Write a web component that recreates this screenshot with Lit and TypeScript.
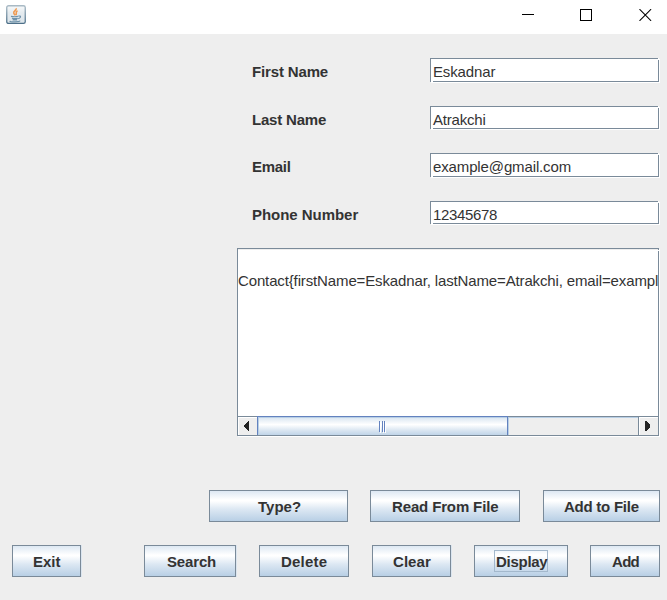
import { LitElement, html, css, svg } from "lit";
import { customElement } from "lit/decorators.js";
import { classMap } from "lit/directives/class-map.js";
import { styleMap } from "lit/directives/style-map.js";

interface Field { label: string; value: string; height: number; labelTracking: number; valueTracking: number; }
interface Action { label: string; width: number; gap: number; inset: number; tracking: number; focused?: boolean; glow?: boolean; }

const FIELDS: Field[] = [
  { label: "First Name", value: "Eskadnar", height: 24, labelTracking: -0.15, valueTracking: -0.13 },
  { label: "Last Name", value: "Atrakchi", height: 23, labelTracking: -0.2, valueTracking: -0.2 },
  { label: "Email", value: "example@gmail.com", height: 24, labelTracking: -0.3, valueTracking: -0.13 },
  { label: "Phone Number", value: "12345678", height: 23, labelTracking: -0.04, valueTracking: -0.34 },
];

const FILE_ACTIONS: Action[] = [
  { label: "Type?", width: 139, gap: 209, inset: 48, tracking: 0 },
  { label: "Read From File", width: 150, gap: 22, inset: 21, tracking: -0.14 },
  { label: "Add to File", width: 117, gap: 23, inset: 20, tracking: -0.25 },
];

const CONTACT_ACTIONS: Action[] = [
  { label: "Exit", width: 69, gap: 12, inset: 20, tracking: 0, glow: true },
  { label: "Search", width: 92, gap: 63, inset: 22, tracking: -0.15, glow: true },
  { label: "Delete", width: 90, gap: 23, inset: 21, tracking: 0.2 },
  { label: "Clear", width: 79, gap: 23, inset: 20, tracking: 0.05, glow: true },
  { label: "Display", width: 94, gap: 23, inset: 21, tracking: -0.28, focused: true },
  { label: "Add", width: 70, gap: 22, inset: 21, tracking: -0.7 },
];

@customElement("app-root")
export class AppRoot extends LitElement {
  static styles = css`
    :host {
      display: block;
      width: 667px;
      height: 600px;
      overflow: hidden;
      background: #eee;
      color: #333;
      font: 15px/17px "Liberation Sans", Arial, sans-serif;
    }
    * { box-sizing: border-box; }
    svg { display: block; }
    .titlebar { display: flex; height: 34px; background: #fff; padding-left: 6px; }
    .logo { margin-top: 5px; }
    .controls { display: flex; margin: 9px 0 0 auto; padding-right: 15px; }
    .controls svg + svg { margin-left: 46px; }
    .controls svg:last-child { margin-left: 47px; }
    .form { padding: 24px 8px 0 252px; }
    .row { display: flex; margin-bottom: 24px; }
    .label { width: 178px; font-weight: bold; padding-top: 5px; white-space: nowrap; }
    .input, .output {
      position: relative;
      background: #fff;
      border: 1px solid #7a8a99;
      box-shadow: 1px 1px 0 #fff;
    }
    .input { width: 229px; padding: 4px 0 0 2px; white-space: nowrap; }
    .input::before, .input::after, .output::before { content: ""; position: absolute; background: #fff; }
    .input::before { left: 0; bottom: -1px; width: 2px; height: 1px; }
    .input::after { right: -1px; top: -1px; width: 1px; height: 2px; }
    .output::before { right: -1px; top: 1px; width: 1px; height: 1px; }
    .output {
      width: 422px;
      height: 188px;
      margin-left: 237px;
      display: flex;
      flex-direction: column;
    }
    .text { flex: 1; white-space: pre; padding-top: 23px; letter-spacing: -0.135px; box-shadow: inset 0 1px 0 #eee; }
    .scroll { display: flex; height: 19px; }
    .arrow { width: 19px; border-top: 1px solid #7a8a99; box-shadow: inset 1px 1px 0 #fff; background: #eee; }
    .right { width: 20px; border-left: 1px solid #7a8a99; }
    .thumb {
      width: 251px;
      border: 1px solid #6382bf;
      border-bottom: 0;
      box-shadow: inset 1px 1px 0 #b8cfe5;
      background: linear-gradient(#dce7f2 5%, #fff 42%, #dce7f2 72%, #c0d4e8);
      display: flex;
      justify-content: center;
    }
    .grip { margin-left: -2px; }
    .track { flex: 1; background: #eee; border-top: 1px solid #7a8a99; box-shadow: inset 1px 1px 0 #b8cfe5; }
    .actions { display: flex; height: 32px; margin-bottom: 23px; }
    .actions.first { margin-top: 54px; }
    .button {
      border: 1px solid #7a8a99;
      background: linear-gradient(#dde8f3, #fff 30%, #fff 33%, #dde8f3 60%, #b8cfe5);
      font-weight: bold;
      padding-top: 7px;
      white-space: nowrap;
      flex: none;
    }
    .glow { box-shadow: 1px 0 0 #dbe5ef; }
    .caption { display: block; }
    .focused { width: 54px; height: 22px; margin: -3px 0 0 -2px; padding: 2px 0 0 1px; border: 1px solid #a3b8cc; }
  `;

  private icon() {
    return svg`<svg class="logo" width="20" height="20" viewBox="0 0 20 20">
      <defs><linearGradient id="g" x1="0" y1="0" x2="0" y2="1"><stop offset="0" stop-color="#f8fafb"/><stop offset=".4" stop-color="#e5ebef"/><stop offset="1" stop-color="#dce5ea"/></linearGradient>
      <linearGradient id="b" x1="0" y1="0" x2="0" y2="1"><stop offset="0" stop-color="#a9bac5"/><stop offset="1" stop-color="#4d7089"/></linearGradient></defs>
      <rect x=".75" y=".75" width="18.5" height="17.700" rx="1.8" fill="url(#g)" stroke="url(#b)" stroke-width="1.3"/>
      <path d="M10 3.200C11.300 5 6.800 6.200 7.800 8.200C8.200 9.200 9 9.600 9.300 10.400M11.500 5.800C8.800 7.200 11.300 8.300 9.800 10" fill="none" stroke="#f09a50" stroke-width="1.6"/>
      <path d="M5 11.300Q9 12.200 12 11.200M6 13.200Q9 14.200 11.800 13.200M6.600 14.900H11.200M3.800 15.800Q4 17 9 16.800Q13.800 16.700 14 15.700M12.300 11.200Q15 10.500 14.400 12.200Q13.700 13.300 12.200 13.800" fill="none" stroke="#6f92aa" stroke-width="1.2"/>
    </svg>`;
  }

  private button(a: Action) {
    return html`<div class=${classMap({ button: true, glow: !!a.glow })} role="button" style=${styleMap({ width: `${a.width}px`, marginLeft: `${a.gap}px`, paddingLeft: `${a.inset}px` })}>
      <span class=${classMap({ caption: true, focused: !!a.focused })} style=${styleMap({ letterSpacing: `${a.tracking}px` })}>${a.label}</span>
    </div>`;
  }

  render() {
    return html`
      <div class="titlebar">
        ${this.icon()}
        <div class="controls">
          <svg width="12" height="12" shape-rendering="crispEdges"><path d="M0 5h12v1H0z"/></svg>
          <svg width="12" height="12" shape-rendering="crispEdges"><path d="M.5.5h11v11H.5z" fill="none" stroke="#000"/></svg>
          <svg width="13" height="12"><path d="M.5.2l11.600 11.600M12.100.2L.5 11.800" stroke="#000" stroke-width="1.1"/></svg>
        </div>
      </div>
      <div class="form">
        ${FIELDS.map((f) => html`<div class="row" style=${styleMap({ height: `${f.height}px` })}>
          <div class="label" style=${styleMap({ letterSpacing: `${f.labelTracking}px` })}>${f.label}</div>
          <div class="input" style=${styleMap({ letterSpacing: `${f.valueTracking}px` })}>${f.value}</div>
        </div>`)}
      </div>
      <div class="output">
        <div class="text">Contact{firstName=Eskadnar, lastName=Atrakchi, email=exampl</div>
        <div class="scroll">
          <div class="arrow"><svg width="19" height="18" shape-rendering="crispEdges"><path d="M11 4v10h-1l-4-4v-2l4-4z" fill="#222"/></svg></div>
          <div class="thumb"><svg class="grip" width="8" height="18" shape-rendering="crispEdges"><path d="M2 5h1v11H2zM5 5h1v11H5zM7 5h1v11H7z" fill="#fff"/><path d="M1 4h1v11H1zM4 4h1v11H4zM6 4h1v11H6z" fill="#6382bf"/></svg></div>
          <div class="track"></div>
          <div class="arrow right"><svg width="19" height="18" shape-rendering="crispEdges"><path d="M6 4v10h1l4-4v-2l-4-4z" fill="#222"/></svg></div>
        </div>
      </div>
      <div class="actions first">${FILE_ACTIONS.map((a) => this.button(a))}</div>
      <div class="actions">${CONTACT_ACTIONS.map((a) => this.button(a))}</div>
    `;
  }
}
